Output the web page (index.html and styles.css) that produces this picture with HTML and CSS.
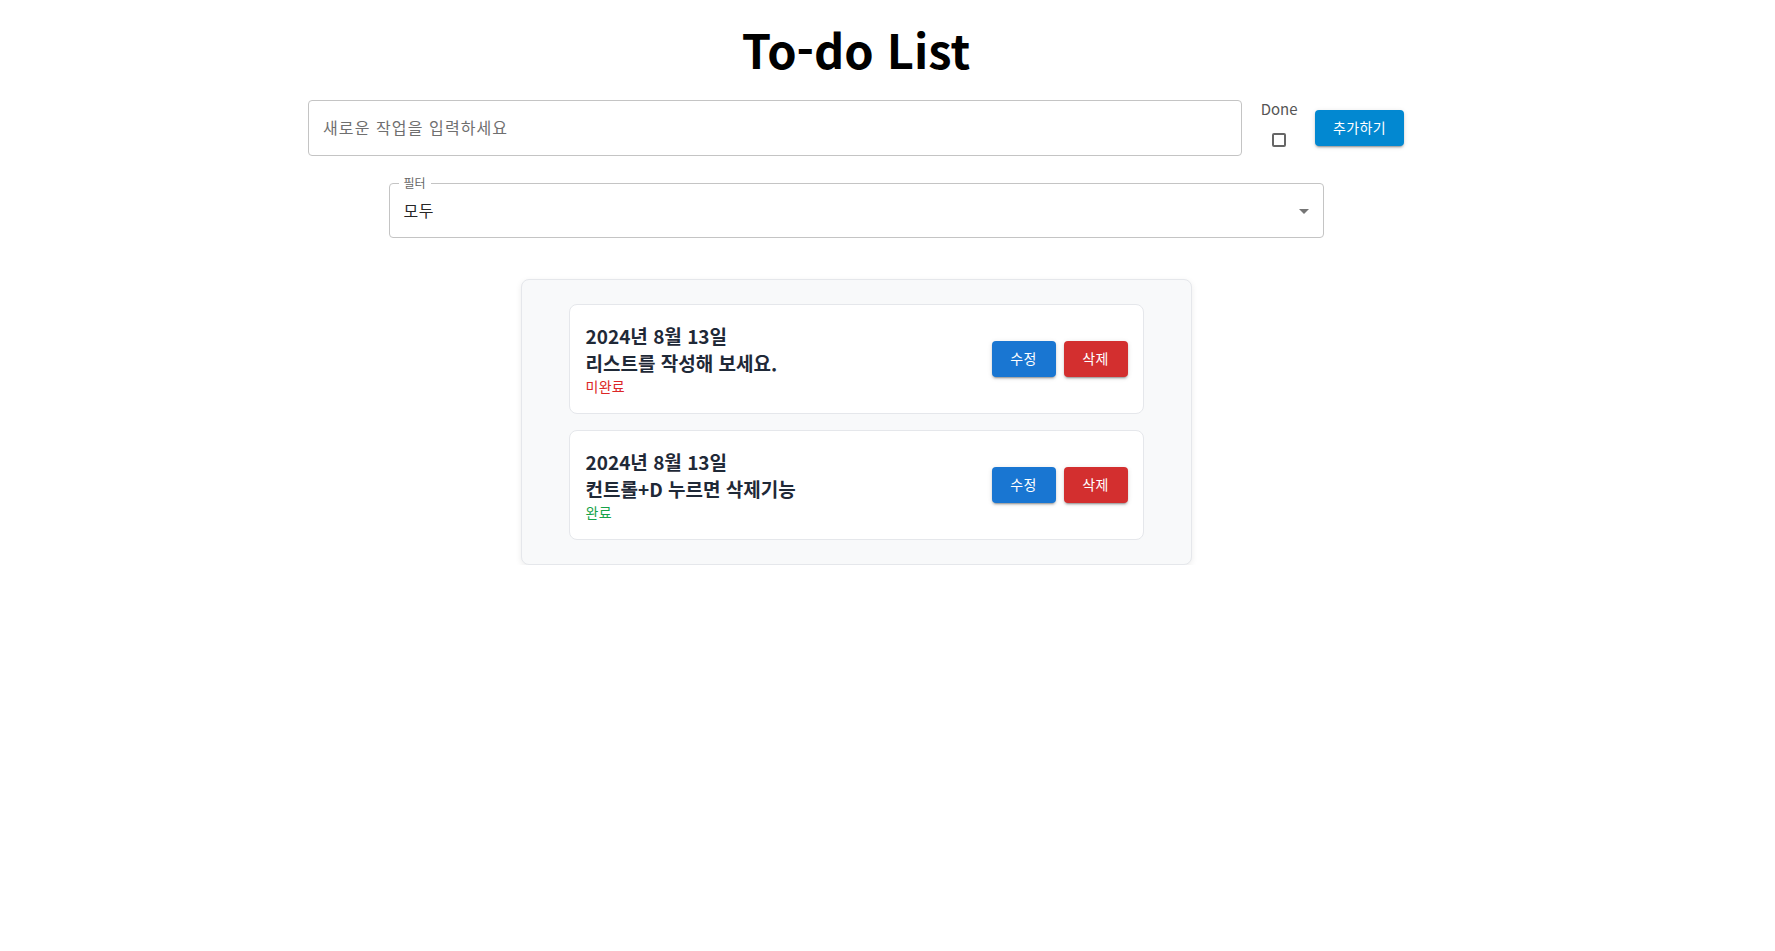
FILE: index.html
```html
<!DOCTYPE html>
<html lang="ko">
<head>
<meta charset="utf-8">
<title>To-do List</title>
<link rel="stylesheet" href="styles.css">
</head>
<body>
<div class="page">
  <h1 class="title">To-do List</h1>

  <div class="add-row">
    <div class="text-input">
      <span class="placeholder">새로운 작업을 입력하세요</span>
    </div>
    <div class="done-col">
      <span class="done-label">Done</span>
      <span class="checkbox"></span>
    </div>
    <button class="btn btn-add">추가하기</button>
  </div>

  <div class="filter">
    <span class="filter-label">필터</span>
    <span class="filter-value">모두</span>
    <span class="filter-arrow"></span>
  </div>

  <div class="list">
    <div class="item">
      <div class="item-text">
        <div class="item-line">2024년 8월 13일</div>
        <div class="item-line">리스트를 작성해 보세요.</div>
        <div class="status status-todo">미완료</div>
      </div>
      <div class="item-actions">
        <button class="btn btn-edit">수정</button>
        <button class="btn btn-delete">삭제</button>
      </div>
    </div>
    <div class="item">
      <div class="item-text">
        <div class="item-line">2024년 8월 13일</div>
        <div class="item-line">컨트롤+D 누르면 삭제기능</div>
        <div class="status status-done">완료</div>
      </div>
      <div class="item-actions">
        <button class="btn btn-edit">수정</button>
        <button class="btn btn-delete">삭제</button>
      </div>
    </div>
  </div>
</div>
</body>
</html>
```

FILE: styles.css
```css
* { box-sizing: border-box; }

html, body {
  margin: 0;
  padding: 0;
  background: #ffffff;
}

body {
  font-family: "Noto Sans CJK KR", "Noto Sans", sans-serif;
  color: rgba(0, 0, 0, 0.87);
}

.page {
  width: 1712px;
  display: flex;
  flex-direction: column;
  align-items: center;
}

.title {
  margin: 19px 0 0 0;
  font-size: 47px;
  line-height: 60px;
  font-weight: 700;
  color: #000;
}

.add-row {
  margin-top: 21px;
  display: flex;
  align-items: center;
  width: 1096px;
  height: 56px;
}

.text-input {
  width: 935px;
  height: 56px;
  border: 1px solid #c4c4c4;
  border-radius: 4px;
  display: flex;
  align-items: center;
  padding: 0 14px;
}

.placeholder {
  font-size: 16px;
  letter-spacing: 1.1px;
  color: #6f6f6f;
  padding-bottom: 2px;
}

.done-col {
  margin-left: 18px;
  width: 38px;
  display: flex;
  flex-direction: column;
  align-items: center;
  align-self: flex-start;
  padding-top: 0;
}

.done-label {
  font-size: 15px;
  line-height: 18px;
  color: #555;
}

.checkbox {
  margin-top: 15px;
  width: 14px;
  height: 14px;
  border: 2px solid #666;
  border-radius: 2px;
}

.btn {
  border: none;
  border-radius: 4px;
  color: #fff;
  font-family: "Noto Sans CJK KR", sans-serif;
  font-size: 14px;
  letter-spacing: 0.4px;
  height: 36px;
  padding: 0 0 3px 0;
  box-shadow: 0 3px 1px -2px rgba(0,0,0,0.2), 0 2px 2px 0 rgba(0,0,0,0.14), 0 1px 5px 0 rgba(0,0,0,0.12);
}

.btn-add {
  margin-left: 17px;
  width: 89px;
  background: #0288d1;
}

.filter {
  position: relative;
  margin-top: 27px;
  width: 935px;
  height: 55px;
  border: 1px solid #c4c4c4;
  border-radius: 4px;
  display: flex;
  align-items: center;
  padding: 0 14px;
}

.filter-label {
  position: absolute;
  left: 9px;
  top: -9px;
  padding: 0 5px;
  background: #fff;
  font-size: 12px;
  line-height: 16px;
  color: #666;
}

.filter-value {
  flex: 1;
  font-size: 16px;
  letter-spacing: 0.5px;
  color: rgba(0, 0, 0, 0.87);
  padding-bottom: 1px;
}

.filter-arrow {
  width: 0;
  height: 0;
  border-left: 5px solid transparent;
  border-right: 5px solid transparent;
  border-top: 5px solid #757575;
  margin-top: 2px;
}

.list {
  margin-top: 41px;
  width: 671px;
  background: #f8f9fa;
  border: 1px solid #e5e7eb;
  border-radius: 8px;
  box-shadow: 0 2px 6px rgba(0, 0, 0, 0.08);
  padding: 24px 47px;
  display: flex;
  flex-direction: column;
  gap: 16px;
}

.item {
  background: #fff;
  border: 1px solid #e5e7eb;
  border-radius: 8px;
  padding: 17px 15px 17px 16px;
  display: flex;
  align-items: center;
  justify-content: space-between;
}

.item-line {
  font-size: 19px;
  line-height: 27px;
  font-weight: 700;
  color: #1f2937;
}

.status {
  font-size: 14px;
  line-height: 20px;
  letter-spacing: 0.3px;
}

.status-todo { color: #dc2626; }
.status-done { color: #16a34a; }

.item-actions {
  display: flex;
  gap: 8px;
}

.btn-edit {
  width: 64px;
  background: #1976d2;
}

.btn-delete {
  width: 64px;
  background: #d32f2f;
}
```
